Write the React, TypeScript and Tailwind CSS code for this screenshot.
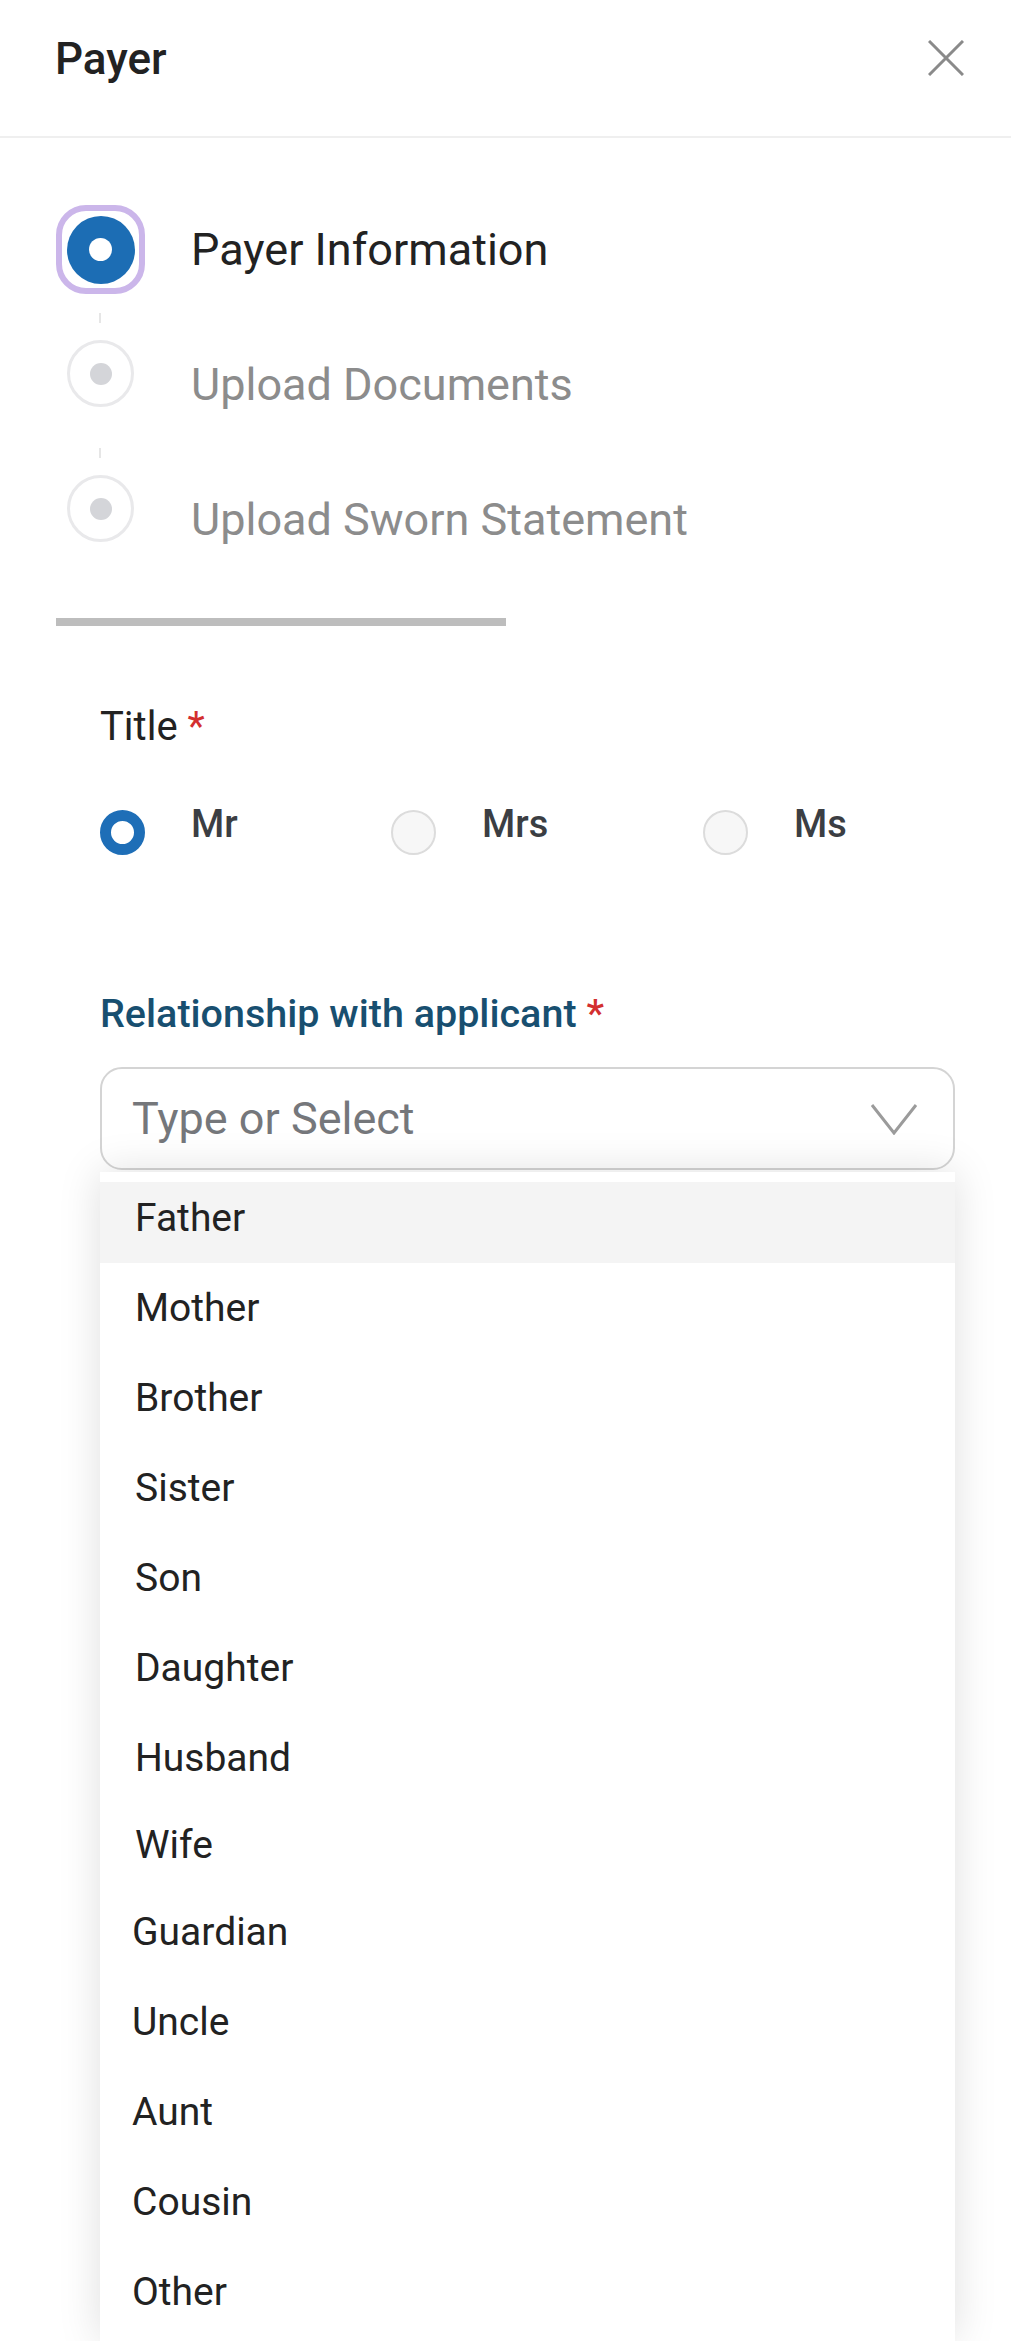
import React from 'react';
import clsx from 'clsx';

const steps = [
  { label: 'Payer Information', active: true },
  { label: 'Upload Documents', active: false },
  { label: 'Upload Sworn Statement', active: false },
];

const titles = [
  { label: 'Mr', checked: true, width: 'w-[291px]' },
  { label: 'Mrs', checked: false, width: 'w-[312px]' },
  { label: 'Ms', checked: false, width: 'w-[200px]' },
];

// row heights/indents follow the screenshot (the list shifts a little after "Wife")
const relations = [
  { label: 'Father', row: 'h-[81px] pb-[8px] bg-[#f4f4f4] pl-[35px]' },
  { label: 'Mother', row: 'h-[90px] pl-[35px]' },
  { label: 'Brother', row: 'h-[90px] pl-[35px]' },
  { label: 'Sister', row: 'h-[90px] pl-[35px]' },
  { label: 'Son', row: 'h-[90px] pl-[35px]' },
  { label: 'Daughter', row: 'h-[90px] pl-[35px]' },
  { label: 'Husband', row: 'h-[90px] pl-[35px]' },
  { label: 'Wife', row: 'h-[85px] pl-[35px]' },
  { label: 'Guardian', row: 'h-[89px] pl-[32px]' },
  { label: 'Uncle', row: 'h-[90px] pl-[32px]' },
  { label: 'Aunt', row: 'h-[90px] pl-[32px]' },
  { label: 'Cousin', row: 'h-[90px] pl-[32px]' },
  { label: 'Other', row: 'h-[90px] pl-[32px]' },
];

const StepDot = ({ active }: { active: boolean }) =>
  active ? (
    <div className="flex h-[89px] w-[89px] items-center justify-center rounded-[30px] border-[6px] border-[#cbb6ea] bg-white">
      <div className="flex h-[68px] w-[68px] items-center justify-center rounded-full bg-[#1c6db4]">
        <div className="h-[23px] w-[23px] rounded-full bg-white" />
      </div>
    </div>
  ) : (
    <div className="flex h-[67px] w-[67px] items-center justify-center rounded-full border-[3px] border-[#e9e9eb] bg-white">
      <div className="h-[22px] w-[22px] rounded-full bg-[#d4d5d9]" />
    </div>
  );

const App = () => {
  return (
    <div className="relative h-[2341px] w-full overflow-hidden bg-white font-['Roboto',sans-serif]">
      {/* header */}
      <header className="flex h-[138px] items-start justify-between border-b-2 border-[#efefef] pl-[55px] pr-[47px]">
        <h1 className="mt-[34px] text-[44px] font-medium leading-[50px] text-[#222]">Payer</h1>
        <button className="mt-[40px]">
          <svg width="36" height="36" viewBox="0 0 36 36" fill="none" stroke="#8a8a8a" strokeWidth="3">
            <path d="M1 1L35 35M35 1L1 35" />
          </svg>
        </button>
      </header>

      {/* stepper */}
      <section className="pl-[56px]">
        <div className="mt-[67px] flex h-[89px] items-center">
          <div className="flex w-[89px] justify-center">
            <StepDot active={steps[0].active} />
          </div>
          <span className="ml-[46px] text-[45px] leading-[52px] text-[#222]">{steps[0].label}</span>
        </div>

        {steps.slice(1).map((step, i) => (
          <div key={step.label}>
            <div className={clsx('ml-[43px] h-[10px] w-[2px] bg-[#e6e6e6]', i === 0 ? 'mt-[19px]' : 'mt-[41px]')} />
            <div className="mt-[17px] flex h-[67px] items-start">
              <div className="flex w-[89px] justify-center">
                <StepDot active={step.active} />
              </div>
              <span className="ml-[46px] mt-[19px] text-[45px] leading-[52px] text-[#8c8c8c]">{step.label}</span>
            </div>
          </div>
        ))}

        <div className="mt-[76px] h-[8px] w-[450px] bg-[#bdbdbd]" />
      </section>

      {/* form */}
      <section className="pl-[100px] pr-[56px]">
        <p className="mt-[77px] text-[40px] leading-[48px] text-[#222]">
          Title <span className="text-[#d32f2f]">*</span>
        </p>

        <div className="mt-[49px] flex items-start">
          {titles.map((t) => (
            <label key={t.label} className={clsx('flex items-start', t.width)}>
              <span
                className={clsx(
                  'mt-[10px] h-[45px] w-[45px] shrink-0 rounded-full',
                  t.checked ? 'border-[11px] border-[#1e6eb7] bg-white' : 'border-2 border-[#dcdcdc] bg-[#f7f7f7]'
                )}
              />
              <span className="ml-[46px] mt-[1px] text-[38px] font-medium leading-[46px] text-[#3b3e43]">{t.label}</span>
            </label>
          ))}
        </div>

        <p className="mt-[136px] text-[39.5px] font-medium leading-[46px] text-[#184f70]">
          Relationship with applicant <span className="text-[#d32f2f]">*</span>
        </p>

        <div className="relative mt-[30px]">
          <div className="flex h-[103px] items-center justify-between rounded-[22px] border-2 border-[#d4d4d4] bg-white pl-[30px] pr-[35px]">
            <span className="text-[45px] leading-[52px] text-[#75777b]">Type or Select</span>
            <svg width="48" height="32" viewBox="0 0 48 32" fill="none" stroke="#9b9b9b" strokeWidth="3">
              <path d="M2 2L24 30L46 2" />
            </svg>
          </div>

          {/* open dropdown */}
          <ul className="absolute left-0 right-0 top-[105px] h-[1169px] bg-white pt-[10px] shadow-[0_0_40px_rgba(0,0,0,0.13)]">
            {relations.map((r) => (
              <li key={r.label} className={clsx('flex items-center text-[39px] text-[#222]', r.row)}>
                {r.label}
              </li>
            ))}
          </ul>
        </div>
      </section>
    </div>
  );
};

export default App;
